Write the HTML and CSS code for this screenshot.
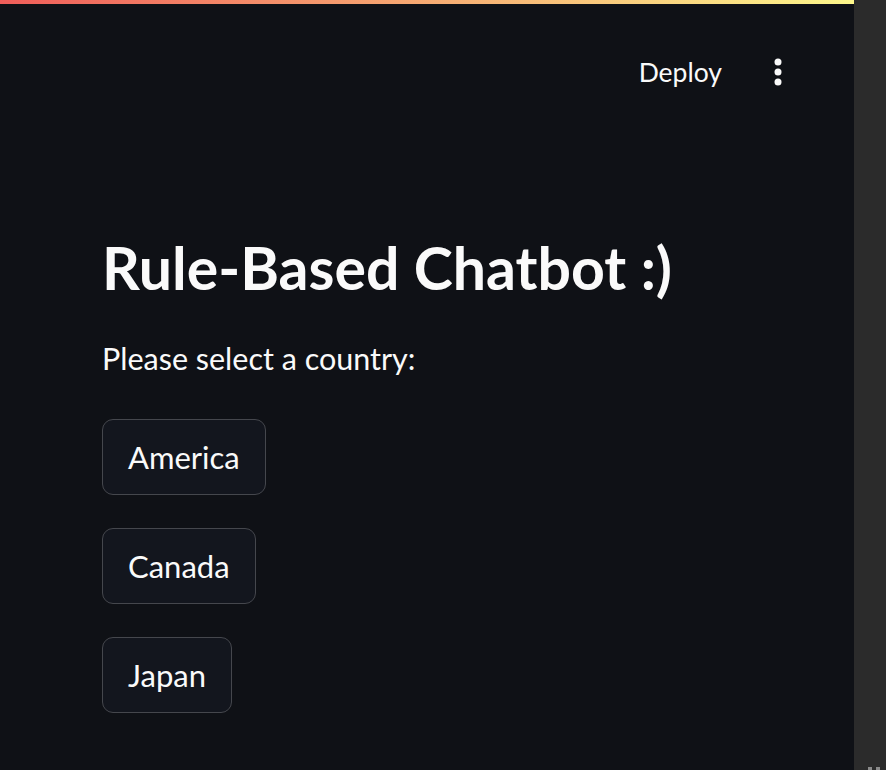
FILE: index.html
```html
<!DOCTYPE html>
<html lang="en">
<head>
<meta charset="utf-8">
<title>Rule-Based Chatbot</title>
<link rel="stylesheet" href="styles.css">
</head>
<body>
<div class="app">
  <div class="main">
    <div class="decoration"></div>
    <header class="header">
      <button class="deploy">Deploy</button>
      <button class="menu" aria-label="Main menu">
        <svg width="8" height="28" viewBox="0 0 8 28"><circle cx="4" cy="4" r="3.5" fill="#fafafa"/><circle cx="4" cy="14" r="3.5" fill="#fafafa"/><circle cx="4" cy="24" r="3.5" fill="#fafafa"/></svg>
      </button>
    </header>
    <section class="content">
      <h1 class="title">Rule-Based Chatbot :)</h1>
      <p class="prompt">Please select a country:</p>
      <div class="buttons">
        <button class="btn">America</button>
        <button class="btn">Canada</button>
        <button class="btn">Japan</button>
      </div>
    </section>
  </div>
  <aside class="scrollbar">
    <div class="grip"><span></span><span></span></div>
  </aside>
</div>
</body>
</html>
```
FILE: styles.css
```css
html, body {
  margin: 0;
  padding: 0;
  height: 100%;
}
body {
  background: #0f1116;
  color: #fafafa;
  font-family: Lato, "Noto Sans", sans-serif;
  overflow: hidden;
}
.app {
  display: flex;
  height: 770px;
}
.main {
  flex: 1;
  display: flex;
  flex-direction: column;
}
.decoration {
  height: 4px;
  background: linear-gradient(90deg, #f05e5a, #fdf78b);
}
.header {
  height: 136px;
  display: flex;
  justify-content: flex-end;
  align-items: center;
  gap: 52px;
  padding-right: 72px;
}
.deploy {
  background: none;
  border: none;
  color: #fafafa;
  font-family: inherit;
  font-size: 26.5px;
  line-height: 40px;
  padding: 0;
}
.menu {
  background: none;
  border: none;
  padding: 0;
  display: flex;
}
.content {
  padding: 94px 0 0 102px;
}
.title {
  margin: 0;
  font-size: 59px;
  line-height: 68px;
  font-weight: 700;
}
.prompt {
  margin: 36px 0 0;
  font-size: 30.5px;
  line-height: 40px;
}
.buttons {
  margin-top: 41px;
  display: flex;
  flex-direction: column;
  align-items: flex-start;
  gap: 33px;
}
.btn {
  background: #13161e;
  border: 1px solid #45474d;
  border-radius: 11px;
  color: #fafafa;
  font-family: inherit;
  font-size: 31px;
  line-height: 74px;
  padding: 0 25px;
}
.scrollbar {
  width: 32px;
  background: #2b2b2b;
  display: flex;
  flex-direction: column;
  justify-content: flex-end;
}
.grip {
  display: flex;
  gap: 4px;
  padding: 0 0 0 14px;
}
.grip span {
  width: 4px;
  height: 3px;
  background: #8a8a8a;
}
```
